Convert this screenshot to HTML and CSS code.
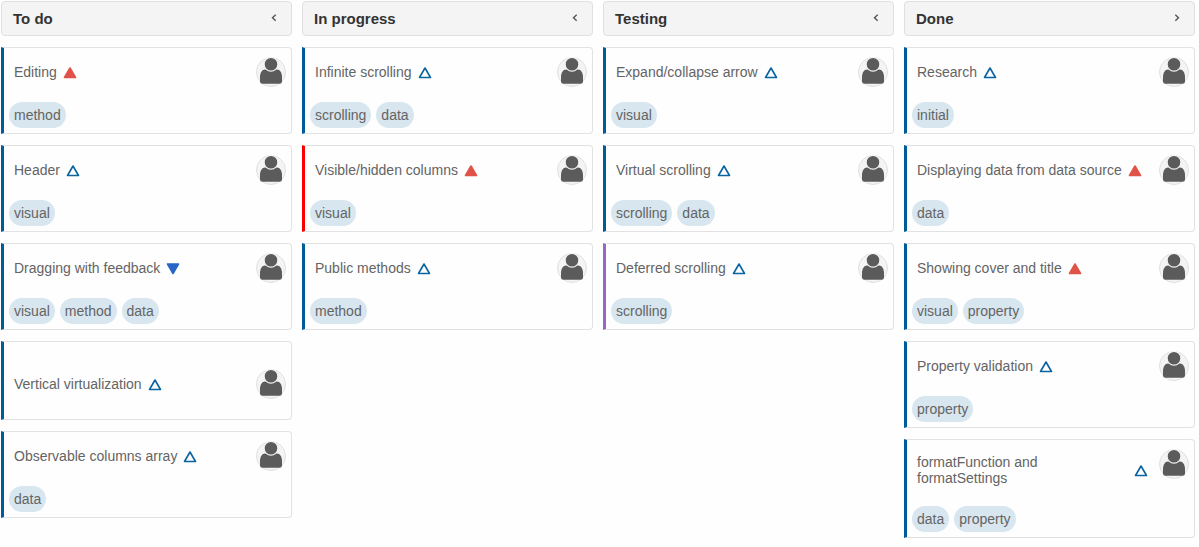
FILE: index.html
```html
<!DOCTYPE html>
<html lang="en">
<head>
<meta charset="utf-8">
<title>Kanban board</title>
<link rel="stylesheet" href="styles.css">
</head>
<body>
<svg class="defs" aria-hidden="true">
  <symbol id="up" viewBox="0 0 14 12"><path d="M7 1 12.500 10.500H1.500Z"/></symbol>
  <symbol id="down" viewBox="0 0 14 12"><path d="M1.500 1H12.500L7 10.500Z"/></symbol>
  <symbol id="chevron" viewBox="0 0 6 9"><path d="M4.700 0.700 1.500 3.700 4.700 6.700"/></symbol>
  <symbol id="user" viewBox="0 0 30 30">
    <path d="M9 12.500C6 12.500 4 16 4 20V24.500Q4 26.700 6.500 26.700H23.500Q26 26.700 26 24.500V20C26 16 24 12.500 21 12.500Z"/>
    <circle class="head" cx="15" cy="7.300" r="6.900"/>
  </symbol>
</svg>
<main class="board" id="board"></main>
<script src="board.js"></script>
</body>
</html>
```

FILE: styles.css
```css
* { box-sizing: border-box; }

body {
  margin: 0;
  background: #fefefe;
  color: #646464;
  font: 14px/16px "Liberation Sans", Arial, sans-serif;
}

.defs { position: absolute; width: 0; height: 0; }

.board {
  display: grid;
  grid-template-columns: repeat(4, minmax(0, 1fr));
  align-items: start;
  gap: 10px;
  padding: 1px 4px 0 1px;
}

.column {
  display: flex;
  flex-direction: column;
  gap: 11px;
}

.column-header {
  display: flex;
  align-items: center;
  justify-content: space-between;
  height: 35px;
  padding: 0 10px 0 11px;
  border: 1px solid #e0e0e0;
  border-radius: 4px;
  background: #f4f4f4;
}

.column-title {
  margin: 0;
  color: #333;
  font-size: 15px;
  line-height: 18px;
}

.toggle {
  display: flex;
  align-items: flex-start;
  justify-content: center;
  width: 14px;
  height: 18px;
  padding: 4px 0 0;
  border: 0;
  background: none;
}

.chevron {
  width: 6px;
  height: 9px;
  fill: none;
  stroke: #555;
  stroke-width: 1.4;
}

.toggle-right .chevron { transform: scaleX(-1); }

.card {
  padding: 9px 5px 5px;
  border: 1px solid #e2e2e2;
  border-left: 3px solid #005b99;
  border-radius: 0 4px 4px 0;
  background: #fefefe;
}

.card-red { border-left-color: #f90000; }
.card-purple { border-left-color: #9966cc; }
.card-plain { padding-top: 27px; padding-bottom: 20px; }

.card-main {
  display: flex;
  align-items: flex-start;
  padding-left: 5px;
}

.card-label {
  display: flex;
  flex: 1;
  align-items: center;
  gap: 6px;
  min-width: 0;
  min-height: 30px;
  padding: 5px 11px 5px 0;
}

.card-title {
  margin: 0;
  font-size: 14px;
  font-weight: 400;
}

.priority {
  flex: none;
  width: 14px;
  height: 12px;
  margin-top: 2px;
  stroke-width: 1.6;
  stroke-linejoin: round;
}

.normal { fill: none; stroke: #0a64a2; }
.high { fill: #df5348; stroke: #df5348; }
.low { fill: #2766c4; stroke: #2766c4; }

.avatar {
  flex: none;
  width: 30px;
  height: 30px;
  border: 1px solid #e0e0e0;
  border-radius: 50%;
  background: #f4f4f4;
}

.avatar svg {
  display: block;
  width: 30px;
  height: 30px;
  margin: -1px;
  fill: #5b5b5b;
}

.head { stroke: #f4f4f4; stroke-width: 1.2; }

.tags {
  display: flex;
  flex-wrap: wrap;
  gap: 5px;
  margin: 15px 0 0;
  padding: 0;
  list-style: none;
}

.tag {
  padding: 5px;
  border-radius: 13px;
  background: #d8e6ef;
}
```

FILE: board.js
```js
const columns = [
  { title: "To do", cards: [
    ["Editing", "high", ["method"]],
    ["Header", "normal", ["visual"]],
    ["Dragging with feedback", "low", ["visual", "method", "data"]],
    ["Vertical virtualization", "normal", []],
    ["Observable columns array", "normal", ["data"]]
  ] },
  { title: "In progress", cards: [
    ["Infinite scrolling", "normal", ["scrolling", "data"]],
    ["Visible/hidden columns", "high", ["visual"], "red"],
    ["Public methods", "normal", ["method"]]
  ] },
  { title: "Testing", cards: [
    ["Expand/collapse arrow", "normal", ["visual"]],
    ["Virtual scrolling", "normal", ["scrolling", "data"]],
    ["Deferred scrolling", "normal", ["scrolling"], "purple"]
  ] },
  { title: "Done", right: true, cards: [
    ["Research", "normal", ["initial"]],
    ["Displaying data from data source", "high", ["data"]],
    ["Showing cover and title", "high", ["visual", "property"]],
    ["Property validation", "normal", ["property"]],
    ["formatFunction and formatSettings", "normal", ["data", "property"]]
  ] }
];

function card([title, priority, tags, color]) {
  const classes = ["card"];
  if (color) classes.push(`card-${color}`);
  if (!tags.length) classes.push("card-plain");
  const list = tags.length
    ? `<ul class="tags">${tags.map(t => `<li class="tag">${t}</li>`).join("")}</ul>`
    : "";
  return `<article class="${classes.join(" ")}">
    <div class="card-main">
      <div class="card-label">
        <h3 class="card-title">${title}</h3>
        <svg class="priority ${priority}" role="img" aria-label="${priority} priority"><use href="#${priority === "low" ? "down" : "up"}"/></svg>
      </div>
      <span class="avatar"><svg aria-hidden="true"><use href="#user"/></svg></span>
    </div>${list}
  </article>`;
}

document.getElementById("board").innerHTML = columns.map(c => `
  <section class="column">
    <header class="column-header">
      <h2 class="column-title">${c.title}</h2>
      <button class="toggle ${c.right ? "toggle-right" : ""}" type="button" aria-label="Collapse ${c.title}"><svg class="chevron"><use href="#chevron"/></svg></button>
    </header>
    ${c.cards.map(card).join("")}
  </section>`).join("");
```
